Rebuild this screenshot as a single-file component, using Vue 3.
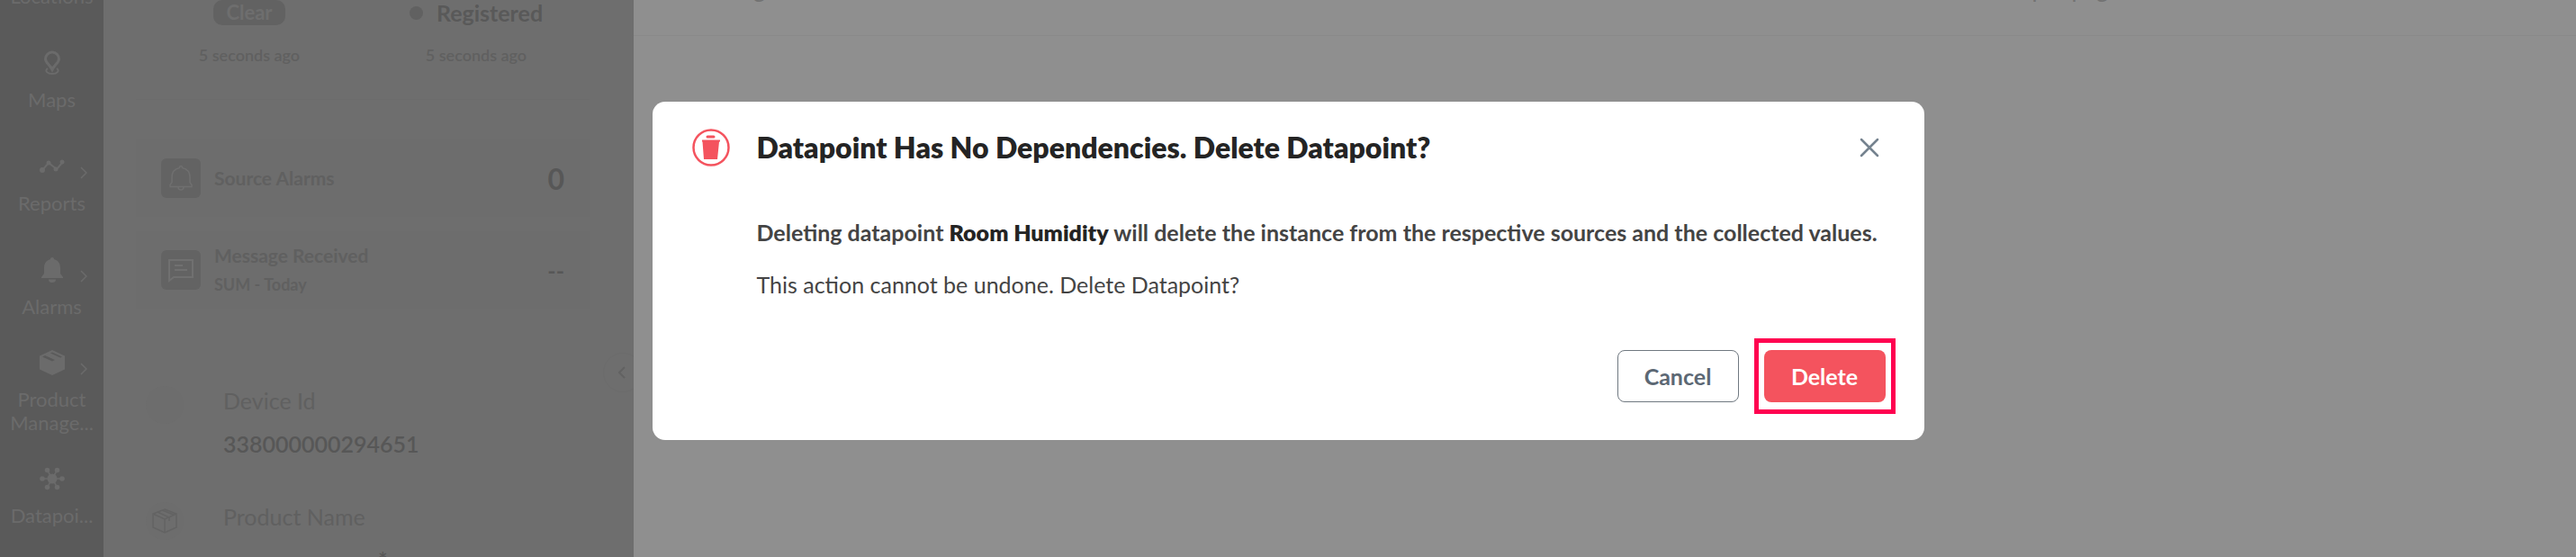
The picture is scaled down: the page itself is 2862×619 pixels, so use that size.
<script setup>
import { ref } from 'vue';
const showModal = ref(true);
const datapoint = ref('Room Humidity');
const menu = [
  { label: 'Maps', icon: 'map' },
  { label: 'Reports', icon: 'report', more: true },
  { label: 'Alarms', icon: 'alarm', more: true, tight: true },
  { label: 'Product Manage...', icon: 'box', more: true, tight: true },
  { label: 'Datapoi...', icon: 'hub' },
];
const closeModal = () => {
  showModal.value = false;
};
</script>

<template>
  <div class="page">
    <nav class="sidebar">
      <a href="#" class="item"><span class="label">Locations</span></a>
      <a v-for="item in menu" :key="item.label" href="#" class="item" :class="{ tight: item.tight }">
        <svg v-if="item.icon === 'map'" class="icon" viewBox="0 0 28 28">
          <path d="M14 2a7.500 7.500 0 0 1 7.500 7.500c0 4-4.500 6-7.500 12-3-6-7.500-8-7.500-12a7.500 7.500 0 0 1 7.500-7.500z" fill="none" stroke="currentColor" stroke-width="3" />
          <path d="M8 15l6 8 6-8-6 3z" fill="currentColor" />
          <path d="M9 20c-4 3 0 6 5 6s9-3 5-6" fill="none" stroke="currentColor" stroke-width="2" />
        </svg>
        <svg v-else-if="item.icon === 'report'" class="icon" viewBox="0 0 28 28">
          <path d="M3 18l7-8 9 7 6-7" fill="none" stroke="currentColor" stroke-width="2" />
          <circle cx="3" cy="18" r="3" fill="currentColor" />
          <circle cx="10" cy="10" r="2.500" fill="currentColor" />
          <circle cx="18" cy="17" r="2.500" fill="currentColor" />
          <circle cx="25" cy="9" r="2.500" fill="currentColor" />
        </svg>
        <svg v-else-if="item.icon === 'alarm'" class="icon" viewBox="0 0 28 28">
          <path d="M14 0c1.500 0 2 1 2 2 5 1.500 7 5 7 10v6l3 4v1H2v-1l3-4v-6c0-5 2-8.500 7-10 0-1 .5-2 2-2zM10 24.500h8a4 3.500 0 0 1-8 0z" fill="currentColor" />
        </svg>
        <svg v-else-if="item.icon === 'box'" class="icon" viewBox="0 0 28 28">
          <path d="M14 0l14 6.500v15L14 28 0 21.500v-15z" fill="currentColor" />
          <path d="M3 7.500l11 5 3-1.500-11-5zM12 3.500l11 5 2-1-11-5z" class="cut" />
        </svg>
        <svg v-else class="icon" viewBox="0 0 28 28">
          <path d="M3 14h22M8.500 4.500l11 19M19.500 4.500l-11 19" stroke="currentColor" stroke-width="1.500" />
          <g fill="currentColor">
            <circle cx="14" cy="14" r="5.500" />
            <circle cx="3" cy="14" r="2.800" />
            <circle cx="25" cy="14" r="2.800" />
            <circle cx="8.500" cy="4.500" r="2.800" />
            <circle cx="19.500" cy="4.500" r="2.800" />
            <circle cx="8.500" cy="23.500" r="2.800" />
            <circle cx="19.500" cy="23.500" r="2.800" />
          </g>
        </svg>
        <svg v-if="item.more" class="more" viewBox="0 0 8 14">
          <path d="M1 1l6 6-6 6" fill="none" stroke="currentColor" stroke-width="1.500" />
        </svg>
        <span class="label">{{ item.label }}</span>
      </a>
    </nav>

    <aside class="panel">
      <div class="states">
        <div class="state">
          <span class="badge">Clear</span>
          <span class="ago">5 seconds ago</span>
        </div>
        <div class="state">
          <span class="status"><i class="dot"></i>Registered</span>
          <span class="ago">5 seconds ago</span>
        </div>
      </div>
      <section class="cards">
        <div class="card">
          <svg class="tile" viewBox="0 0 44 44" fill="none" stroke="#6f6f6f" stroke-width="1.500">
            <path d="M22 8.500c1 0 1.500 1 1.500 2 6 1.500 8.500 5 8.500 10v6l2 3v2H10v-2l2-3v-6c0-5 2.500-8.500 8.500-10 0-1 .5-2 1.500-2zM19 32a3 3 0 0 0 6 0" />
          </svg>
          <div class="card-text">
            <p>Source Alarms</p>
          </div>
          <strong>0</strong>
        </div>
        <div class="card">
          <svg class="tile" viewBox="0 0 44 44" fill="none" stroke="#707070" stroke-width="2">
            <path d="M9 34V11h26v19H14zM15 17h9M15 22h14" />
          </svg>
          <div class="card-text">
            <p>Message Received</p>
            <small>SUM - Today</small>
          </div>
          <strong class="empty">--</strong>
        </div>
      </section>
      <dl class="details">
        <div class="detail">
          <span class="round"></span>
          <div>
            <dt>Device Id</dt>
            <dd>338000000294651</dd>
          </div>
        </div>
        <div class="detail">
          <span class="round">
            <svg viewBox="0 0 28 28" fill="none" stroke="currentColor" stroke-width="1.500">
              <path d="M14 1l13 5v15l-13 6-13-6V6zM1 6l13 6 13-6M14 12v15M6 4l13 6v4M11 2l13 5" />
            </svg>
          </span>
          <div>
            <dt>Product Name</dt>
            <dd class="clipped">*</dd>
          </div>
        </div>
      </dl>
      <button class="collapse" aria-label="Collapse panel">
        <svg viewBox="0 0 8 14">
          <path d="M7 1L1 7l6 6" fill="none" stroke="currentColor" stroke-width="2" />
        </svg>
      </button>
    </aside>

    <main class="content">
      <header class="toolbar">
        <span>Showing</span>
        <span>Items per page</span>
      </header>
    </main>

    <div v-if="showModal" class="overlay">
      <div class="modal" role="dialog" aria-labelledby="modal-title">
        <header class="modal-header">
          <svg class="trash" viewBox="0 0 42 42">
            <circle cx="21" cy="21" r="19.500" fill="none" stroke="#f4535e" stroke-width="2.500" />
            <path d="M17 7.500h7q1.500 0 1.500 1.500t-1.500 1.500h-7q-1.500 0-1.500-1.500t1.500-1.500zM11 12.500h20v2h-1l-2 19.500h-15l-1.500-19.500H11z" fill="#f4535e" />
          </svg>
          <h1 id="modal-title">Datapoint Has No Dependencies. Delete Datapoint?</h1>
          <button class="close" aria-label="Close" @click="closeModal">
            <svg viewBox="0 0 36 36">
              <path d="M9 9l18 18M27 9L9 27" stroke="currentColor" stroke-width="2.500" stroke-linecap="round" />
            </svg>
          </button>
        </header>
        <div class="modal-body">
          <p class="warning">Deleting datapoint <b>{{ datapoint }}</b> will delete the instance from the respective sources and the collected values.</p>
          <p>This action cannot be undone. Delete Datapoint?</p>
        </div>
        <footer class="modal-footer">
          <button class="cancel" @click="closeModal">Cancel</button>
          <button class="delete" @click="closeModal">Delete</button>
        </footer>
      </div>
    </div>
  </div>
</template>

<style>
body {
  margin: 0;
  overflow: hidden;
}
</style>

<style scoped>
* {
  box-sizing: border-box;
}
p,
h1,
dl,
dd {
  margin: 0;
}
button {
  font-family: inherit;
  cursor: pointer;
}
.page {
  display: grid;
  grid-template-columns: 115px 589px 1fr;
  height: 100vh;
  overflow: hidden;
  background-color: #8f8f8f;
  font-family: Lato, 'Open Sans', sans-serif;
}
.sidebar {
  display: flex;
  flex-direction: column;
  margin-top: -17px;
  background-color: #5a5a5a;
}
.item {
  position: relative;
  display: flex;
  flex-direction: column;
  align-items: center;
  gap: 14px;
  margin-bottom: 47px;
  padding: 0 6px;
  color: #6b6b6b;
  font-size: 22px;
  line-height: 26px;
  text-align: center;
  text-decoration: none;
}
.item.tight {
  margin-bottom: 35px;
}
.icon {
  width: 28px;
  height: 28px;
}
.cut {
  fill: #5a5a5a;
}
.more {
  position: absolute;
  top: 14px;
  right: 18px;
  width: 8px;
  height: 14px;
}
.label {
  max-width: 100px;
}
.panel {
  position: relative;
  overflow: hidden;
  padding: 0 49px 0 36px;
  background-color: #6e6e6e;
  color: #606060;
}
.states {
  display: grid;
  grid-template-columns: 1fr 1fr;
  height: 111px;
  border-bottom: 1px solid #6c6c6c;
}
.state {
  display: flex;
  flex-direction: column;
  align-items: center;
}
.badge {
  height: 28px;
  padding: 0 14px;
  border-radius: 10px;
  background-color: #626262;
  color: #6e6e6e;
  font-size: 22px;
  font-weight: 700;
  line-height: 28px;
}
.status {
  display: flex;
  align-items: center;
  gap: 15px;
  height: 28px;
  color: #595959;
  font-size: 25px;
  font-weight: 700;
}
.dot {
  width: 15px;
  height: 15px;
  border-radius: 50%;
  background-color: #616161;
}
.ago {
  margin-top: 20px;
  font-size: 18px;
  line-height: 26px;
  font-weight: 600;
}
.cards {
  display: flex;
  flex-direction: column;
  gap: 16px;
  padding-top: 44px;
}
.card {
  display: flex;
  align-items: center;
  gap: 15px;
  height: 86px;
  padding: 0 28px;
  background-color: #6d6d6d;
}
.tile {
  width: 44px;
  height: 44px;
  border-radius: 6px;
  background-color: #636363;
}
.card-text {
  display: flex;
  flex-direction: column;
  gap: 6px;
  flex: 1;
  font-size: 21px;
  font-weight: 700;
  line-height: 26px;
}
.card-text small {
  font-size: 18px;
}
.card strong {
  color: #575757;
  font-size: 32px;
}
.card .empty {
  font-size: 25px;
}
.details {
  display: flex;
  flex-direction: column;
  gap: 49px;
  padding: 86px 0 0 11px;
}
.detail {
  display: flex;
  gap: 44px;
  font-size: 25px;
  line-height: 32px;
}
.detail dd {
  margin-top: 16px;
  color: #575757;
  font-weight: 600;
}
.detail .clipped {
  padding-left: 172px;
}
.round {
  display: flex;
  justify-content: center;
  align-items: center;
  width: 42px;
  height: 42px;
  border-radius: 50%;
  background-color: #6d6d6d;
  color: #636363;
}
.round svg {
  width: 28px;
  height: 28px;
}
.collapse {
  position: absolute;
  top: 392px;
  right: -10px;
  width: 44px;
  height: 44px;
  padding: 0 0 0 16px;
  border: 1px solid #6c6c6c;
  border-radius: 50%;
  background: none;
  color: #626262;
  text-align: left;
}
.collapse svg {
  display: block;
  width: 8px;
  height: 14px;
}
.toolbar {
  display: flex;
  justify-content: space-between;
  align-items: flex-end;
  height: 40px;
  padding: 0 506px 36px 49px;
  border-bottom: 1px solid #8a8a8a;
  color: #727272;
  font-size: 26px;
  line-height: 32px;
}
.overlay {
  position: fixed;
  inset: 0;
  display: flex;
  justify-content: center;
  align-items: flex-start;
  padding-top: 113px;
}
.modal {
  width: min(1413px, 94vw);
  padding: 30px 43px 42px 44px;
  border-radius: 14px;
  background-color: white;
  color: #444444;
}
.modal-header {
  display: flex;
  align-items: center;
  gap: 30px;
}
.trash {
  width: 42px;
  height: 42px;
}
h1 {
  flex: 1;
  color: #242424;
  font-size: 32px;
  font-weight: 800;
  line-height: 42px;
}
.close {
  width: 36px;
  height: 36px;
  padding: 0;
  border: none;
  background: none;
  color: #75838f;
}
.close svg {
  display: block;
}
.modal-body {
  display: flex;
  flex-direction: column;
  gap: 26px;
  margin: 57px 0;
  padding-left: 72px;
  font-size: 25px;
  line-height: 32px;
}
.warning {
  font-weight: 700;
}
.warning b {
  color: #242424;
  font-weight: 800;
}
.modal-footer {
  display: flex;
  justify-content: flex-end;
  gap: 28px;
}
.modal-footer button {
  position: relative;
  min-width: 135px;
  height: 58px;
  border-radius: 8px;
  font-size: 25px;
  font-weight: 700;
}
.cancel {
  border: 1px solid #6f7880;
  background-color: white;
  color: #5c6874;
}
.delete {
  border: none;
  background-color: #f4535e;
  color: white;
}
.delete::after {
  content: '';
  position: absolute;
  inset: -13px -11px;
  border: 5px solid #ff0050;
}
</style>
